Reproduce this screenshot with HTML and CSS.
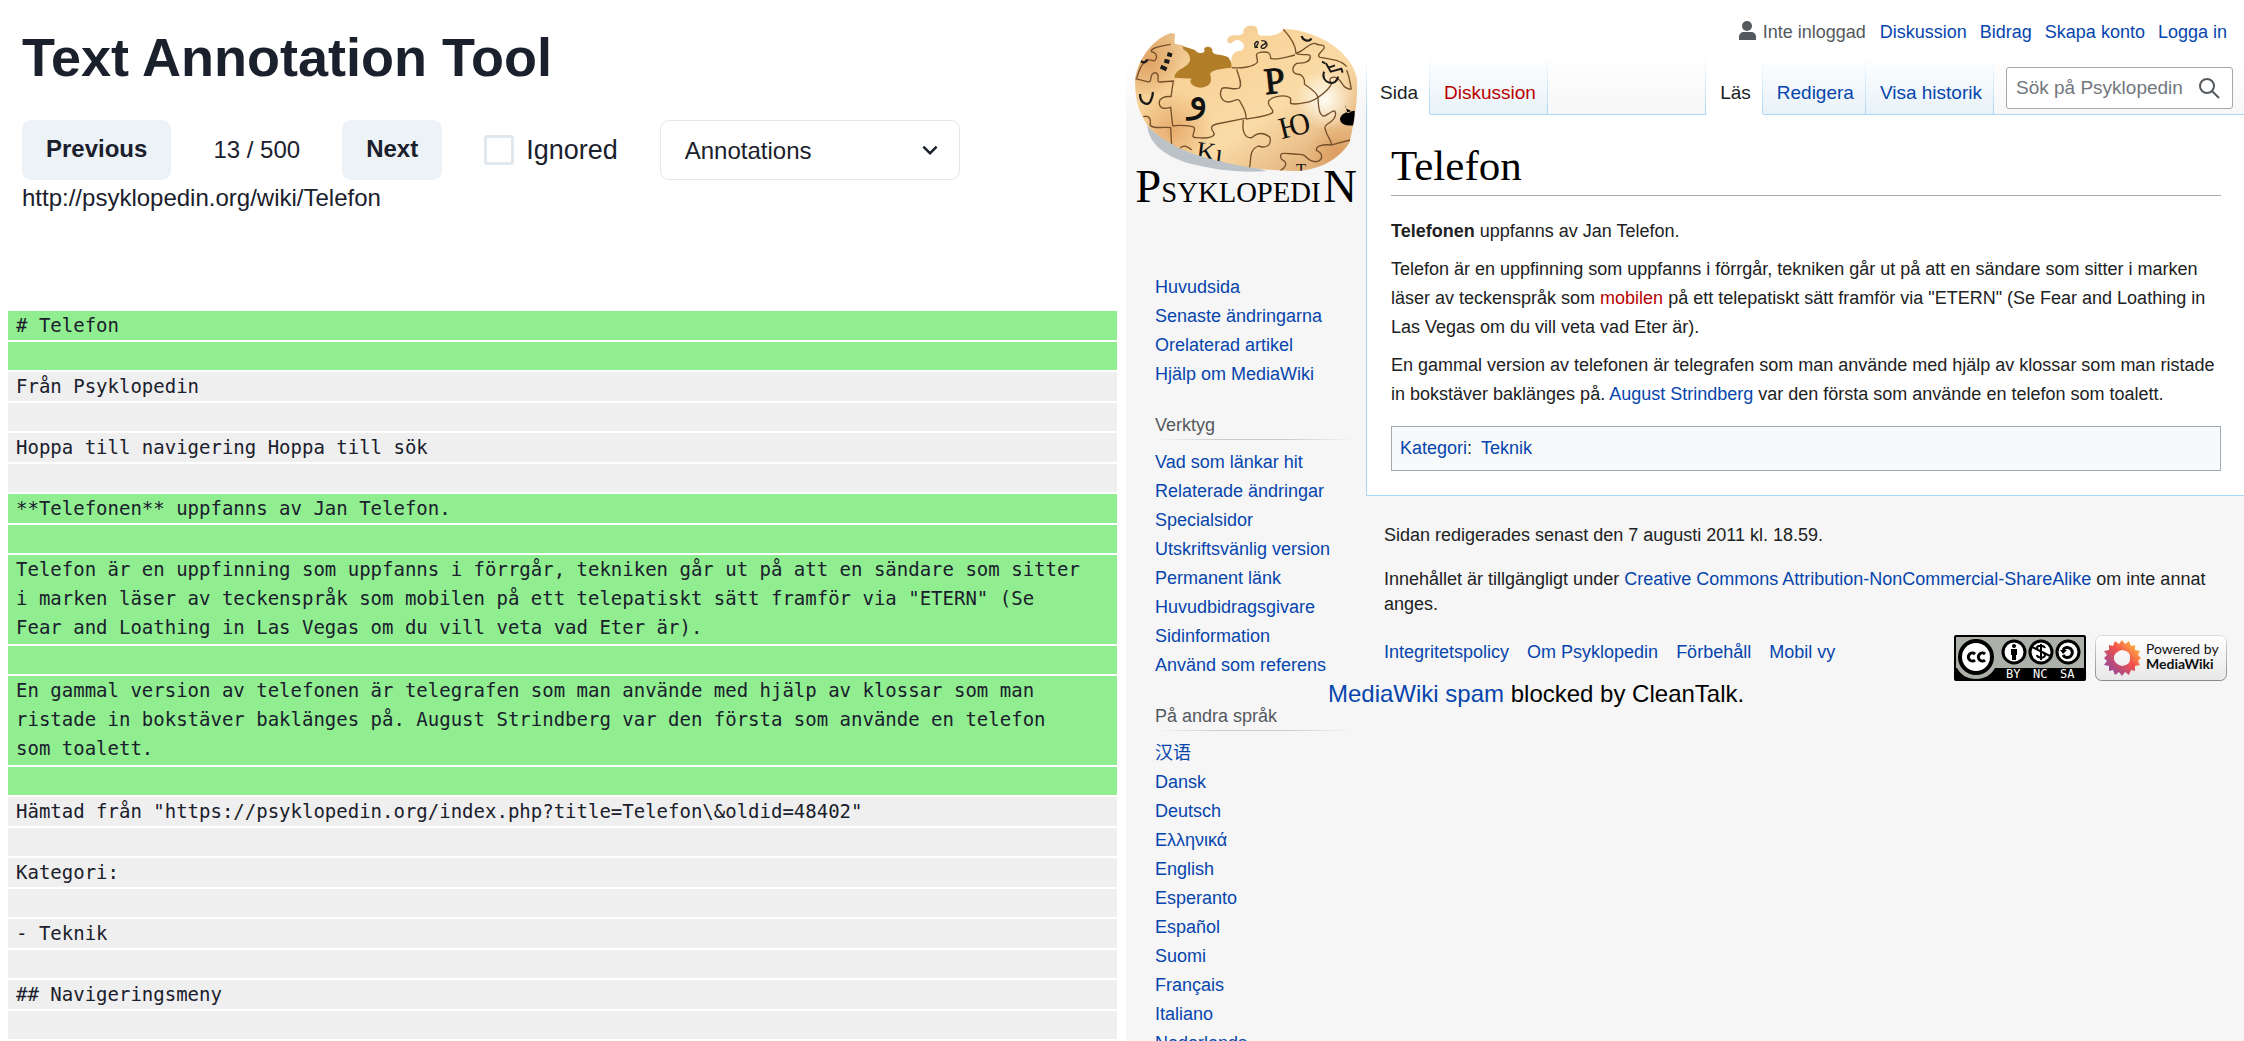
FILE: index.html
```html
<!DOCTYPE html>
<html lang="sv">
<head>
<meta charset="utf-8">
<title>Text Annotation Tool</title>
<link rel="stylesheet" href="styles.css">
</head>
<body>
<div class="app">
  <section class="tool">
    <header class="tool-head">
      <h1 class="tool-title">Text Annotation Tool</h1>
      <div class="controls">
        <button class="btn" type="button">Previous</button>
        <span class="counter">13 / 500</span>
        <button class="btn" type="button">Next</button>
        <label class="check"><input class="check-box" type="checkbox">Ignored</label>
        <div class="picker">
          <select class="picker-select" aria-label="Annotations"><option>Annotations</option></select>
          <svg class="picker-arrow" viewBox="0 0 24 24" aria-hidden="true"><path d="M16.59 8.59L12 13.17 7.41 8.59 6 10l6 6 6-6z"/></svg>
        </div>
      </div>
      <p class="source">http://psyklopedin.org/wiki/Telefon</p>
    </header>
    <div class="lines">
      <p class="line keep"># Telefon</p>
      <p class="line keep blank"></p>
      <p class="line">Från Psyklopedin</p>
      <p class="line blank"></p>
      <p class="line">Hoppa till navigering Hoppa till sök</p>
      <p class="line blank"></p>
      <p class="line keep">**Telefonen** uppfanns av Jan Telefon.</p>
      <p class="line keep blank"></p>
      <p class="line keep long">Telefon är en uppfinning som uppfanns i förrgår, tekniken går ut på att en sändare som sitter i marken läser av teckenspråk som mobilen på ett telepatiskt sätt framför via "ETERN" (Se Fear and Loathing in Las Vegas om du vill veta vad Eter är).</p>
      <p class="line keep blank"></p>
      <p class="line keep long">En gammal version av telefonen är telegrafen som man använde med hjälp av klossar som man ristade in bokstäver baklänges på. August Strindberg var den första som använde en telefon som toalett.</p>
      <p class="line keep blank"></p>
      <p class="line">Hämtad från "https://psyklopedin.org/index.php?title=Telefon\&amp;oldid=48402"</p>
      <p class="line blank"></p>
      <p class="line">Kategori:</p>
      <p class="line blank"></p>
      <p class="line">- Teknik</p>
      <p class="line blank"></p>
      <p class="line">## Navigeringsmeny</p>
      <p class="line blank"></p>
    </div>
  </section>

  <section class="wiki">
    <aside class="side">
      <a class="logo" href="#" aria-label="Psyklopedin">
        <svg viewBox="18 0 720 720">
          <defs>
            <linearGradient id="globe" x1="0" y1="0" x2="1" y2="1">
              <stop offset="0" stop-color="#dcae78"/><stop offset=".3" stop-color="#f8d399"/>
              <stop offset=".6" stop-color="#fadba6"/><stop offset="1" stop-color="#d8a06a"/>
            </linearGradient>
            <radialGradient id="shine"><stop offset="0" stop-color="#fffdf5"/><stop offset="1" stop-color="#fffdf5" stop-opacity="0"/></radialGradient>
            <radialGradient id="tan"><stop offset="0" stop-color="#d98f4c" stop-opacity=".6"/><stop offset="1" stop-color="#d98f4c" stop-opacity="0"/></radialGradient>
            <clipPath id="shell"><path d="M152 99C105 115 60 165 46 232C42 300 60 350 92 388C120 412 150 432 190 450C300 492 420 512 520 513C600 512 660 475 690 425C698 380 712 330 712 240C700 175 640 125 570 102C545 92 515 85 490 87C480 104 455 109 430 107C408 110 416 92 410 82C398 72 372 76 370 94C372 104 360 106 345 106C325 105 318 118 324 128C334 136 340 120 352 120C370 122 380 142 364 152C335 150 331 175 335 203C310 206 275 208 270 222C280 250 265 262 240 263C215 260 205 245 215 236L163 233C165 205 205 205 210 180C212 150 180 152 190 136L166 132C160 124 168 110 164 101Z"/></clipPath>
          </defs>
          <path d="M82 378C88 430 130 465 200 488C270 507 360 520 440 513L200 440Z" fill="#bcc3c8"/>
          <path d="M185 137L225 150C235 165 260 160 252 147C258 136 275 140 277 150C275 168 300 160 325 172L350 215L270 275L200 270L155 235Z" fill="#b27f28"/>
          <g clip-path="url(#shell)">
            <path d="M40 70H720V520H40Z" fill="url(#globe)"/>
            <circle cx="615" cy="300" r="90" fill="url(#shine)"/>
            <circle cx="90" cy="190" r="100" fill="url(#tan)"/>
            <circle cx="160" cy="390" r="120" fill="url(#tan)"/>
            <circle cx="650" cy="460" r="90" fill="url(#tan)"/>
            <g fill="none" stroke="#75502a" stroke-width="4">
              <path d="M152 133C120 138 90 145 94 155C118 160 110 185 98 182C85 175 65 180 50 235"/>
              <path d="M46 236L82 245C100 250 85 220 105 218C125 220 105 248 120 246L160 243L153 290C135 288 115 295 118 312C122 330 140 325 152 322L158 378"/>
              <path d="M70 350C85 345 95 355 90 375C100 388 120 380 152 383L155 440"/>
              <path d="M158 378C180 374 215 378 222 382C230 395 205 412 230 413C262 416 280 412 283 402C280 392 262 380 290 372L375 355"/>
              <path d="M350 208C356 230 368 250 358 264C340 272 320 258 306 265C295 285 305 305 325 306C345 304 355 290 362 308C375 330 380 345 378 358"/>
              <path d="M335 203C365 206 400 200 412 187C415 175 400 160 420 157C455 152 450 165 452 175C470 182 495 172 525 165"/>
              <path d="M490 88C515 115 528 140 528 160C545 168 565 160 570 166C575 185 555 190 530 190C515 200 515 218 530 222C550 222 555 240 553 252C570 265 590 275 594 292"/>
              <path d="M378 357C410 352 440 350 458 338C462 325 440 318 446 303C460 285 500 285 510 293C518 305 500 312 525 312C560 308 580 305 594 292C615 278 630 265 635 250C620 235 640 225 655 237C670 248 665 265 694 268"/>
              <path d="M370 360C365 395 375 415 395 413C410 400 430 395 450 412C455 440 435 445 415 438C385 450 395 480 388 505"/>
              <path d="M594 292C595 330 600 350 615 348C635 335 645 325 647 342C645 370 610 370 615 385C620 410 635 420 635 435L690 420"/>
              <path d="M635 435C605 432 585 440 590 452C610 460 610 480 590 485C555 485 565 462 540 463C505 463 470 450 485 478C510 490 490 508 480 512"/>
              <path d="M528 160C560 150 565 128 585 130C600 140 615 130 612 145C600 160 590 165 600 172C635 178 665 180 680 200M680 210C690 235 690 250 694 268M180 445C190 432 205 440 215 450"/>
            </g>
            <g fill="#111" font-family="'Liberation Serif', serif">
              <text x="203" y="330" font-size="128" font-family="'DejaVu Sans', sans-serif">و</text>
              <text x="432" y="280" font-size="112" stroke="#111" stroke-width="3" transform="rotate(-6 460 240)">P</text>
              <text x="474" y="410" font-size="92" transform="rotate(-14 510 370)">Ю</text>
              <text x="230" y="482" font-size="80" transform="rotate(7 260 450)">Kı</text>
              <text x="528" y="526" font-size="50">T</text>
            </g>
            <g fill="none" stroke="#1b1b1b" stroke-width="7">
              <path d="M60 282C60 315 88 318 92 302C96 292 100 285 98 276M62 182C70 192 80 185 82 178M545 108C550 125 570 125 574 115"/>
              <path d="M606 185L616 190M618 190L632 215L664 206L668 218M626 203L645 196M612 215C600 250 650 262 654 230" stroke-width="6"/>
              <path d="M404 144C412 138 418 125 412 124C400 128 402 144 414 142M424 122C440 122 444 130 430 134C418 140 424 150 436 142C446 134 440 126 434 130" stroke-width="4"/>
              <path d="M122 200L140 208M133 182L148 186M142 162L156 166" stroke-width="12"/>
            </g>
            <path d="M704 332C680 335 662 340 660 358C662 378 690 378 704 376ZM676 315C674 330 690 328 695 335L682 340Z" fill="#000"/>
          </g>
          <g fill="#000" font-family="'Liberation Serif', serif">
            <text x="46" y="605" font-size="140">P</text>
            <text x="124" y="605" font-size="86">SYKLOPEDI</text>
            <text x="610" y="605" font-size="140">N</text>
          </g>
        </svg>
      </a>
      <nav class="menu" aria-label="Navigering">
        <ul class="menu-list">
          <li><a href="#">Huvudsida</a></li>
          <li><a href="#">Senaste ändringarna</a></li>
          <li><a href="#">Orelaterad artikel</a></li>
          <li><a href="#">Hjälp om MediaWiki</a></li>
        </ul>
      </nav>
      <nav class="menu">
        <h2 class="menu-title">Verktyg</h2>
        <ul class="menu-list">
          <li><a href="#">Vad som länkar hit</a></li>
          <li><a href="#">Relaterade ändringar</a></li>
          <li><a href="#">Specialsidor</a></li>
          <li><a href="#">Utskriftsvänlig version</a></li>
          <li><a href="#">Permanent länk</a></li>
          <li><a href="#">Huvudbidragsgivare</a></li>
          <li><a href="#">Sidinformation</a></li>
          <li><a href="#">Använd som referens</a></li>
        </ul>
      </nav>
      <nav class="menu">
        <h2 class="menu-title">På andra språk</h2>
        <ul class="menu-list">
          <li><a href="#" lang="zh">汉语</a></li>
          <li><a href="#">Dansk</a></li>
          <li><a href="#">Deutsch</a></li>
          <li><a href="#">Ελληνικά</a></li>
          <li><a href="#">English</a></li>
          <li><a href="#">Esperanto</a></li>
          <li><a href="#">Español</a></li>
          <li><a href="#">Suomi</a></li>
          <li><a href="#">Français</a></li>
          <li><a href="#">Italiano</a></li>
          <li><a href="#">Nederlands</a></li>
        </ul>
      </nav>
    </aside>

    <div class="page">
      <header class="page-head">
        <nav class="personal">
          <span class="anon">
            <svg class="user-icon" viewBox="0 0 17 19" aria-hidden="true"><circle cx="8" cy="5" r="5"/><path d="M0 19v-3c0-3 2-5 5-5h7c3 0 5 2 5 5v3z"/></svg>
            Inte inloggad
          </span>
          <a href="#">Diskussion</a>
          <a href="#">Bidrag</a>
          <a href="#">Skapa konto</a>
          <a href="#">Logga in</a>
        </nav>
        <div class="tabs">
          <nav class="tab-group start">
            <a class="tab active" href="#">Sida</a>
            <a class="tab missing" href="#">Diskussion</a>
          </nav>
          <nav class="tab-group end">
            <a class="tab active" href="#">Läs</a>
            <a class="tab" href="#">Redigera</a>
            <a class="tab" href="#">Visa historik</a>
          </nav>
          <form class="search">
            <input class="search-input" type="text" placeholder="Sök på Psyklopedin" aria-label="Sök på Psyklopedin">
            <button class="search-btn" type="button" aria-label="Sök"><svg viewBox="0 0 22 22"><circle cx="9" cy="9" r="7"/><path d="M14 14l7 7"/></svg></button>
          </form>
        </div>
      </header>

      <main class="article">
        <h1 class="article-title">Telefon</h1>
        <p><b>Telefonen</b> uppfanns av Jan Telefon.</p>
        <p>Telefon är en uppfinning som uppfanns i förrgår, tekniken går ut på att en sändare som sitter i marken läser av teckenspråk som <a class="missing" href="#">mobilen</a> på ett telepatiskt sätt framför via "ETERN" (Se Fear and Loathing in Las Vegas om du vill veta vad Eter är).</p>
        <p>En gammal version av telefonen är telegrafen som man använde med hjälp av klossar som man ristade in bokstäver baklänges på. <a href="#">August Strindberg</a> var den första som använde en telefon som toalett.</p>
        <div class="categories"><span><a href="#">Kategori</a>:</span><a href="#">Teknik</a></div>
      </main>

      <footer class="foot">
        <p>Sidan redigerades senast den 7 augusti 2011 kl. 18.59.</p>
        <p>Innehållet är tillgängligt under <a href="#">Creative Commons Attribution-NonCommercial-ShareAlike</a> om inte annat anges.</p>
        <div class="foot-row">
          <nav class="foot-links">
            <a href="#">Integritetspolicy</a>
            <a href="#">Om Psyklopedin</a>
            <a href="#">Förbehåll</a>
            <a href="#">Mobil vy</a>
          </nav>
          <div class="badges">
            <a href="#" aria-label="Creative Commons BY NC SA">
              <svg class="badge" viewBox="0 0 132 46">
                <rect width="132" height="46" rx="2"/>
                <path d="M2 2H130V33H41C37 40 31 44 22 44S7 40 3 33H2Z" fill="#abb1a8"/>
                <circle cx="22" cy="22" r="18"/><circle cx="22" cy="22" r="14" fill="#fff"/>
                <g fill="none" stroke="#000" stroke-width="3"><path d="M21 19a4 4 0 1 0 0 6M31 19a4 4 0 1 0 0 6"/></g>
                <g fill="#fff" stroke="#000" stroke-width="3"><circle cx="60" cy="17" r="11"/><circle cx="87" cy="17" r="11"/><circle cx="114" cy="17" r="11"/></g>
                <circle cx="60" cy="11" r="2"/><path d="M57 14h6v6h-1v5h-4v-5h-1z"/>
                <g fill="none" stroke="#000" stroke-width="2"><path d="M91 13c-1-3-8-3-8 0 0 4 8 3 8 7 0 4-8 3-8 0M87 9v16M78 12l18 9"/><path d="M109 15a5 5 0 1 1 0 5" stroke-width="3"/></g>
                <path d="M106 15h7l-4 4z"/>
                <g fill="#fff" font-family="'DejaVu Sans Mono', monospace" font-size="12"><text x="52" y="43">BY</text><text x="79" y="43">NC</text><text x="106" y="43">SA</text></g>
              </svg>
            </a>
            <a href="#" aria-label="Powered by MediaWiki">
              <svg class="badge" viewBox="0 0 132 46">
                <defs>
                  <linearGradient id="plate" x1="0" y1="0" x2="0" y2="1"><stop offset="0" stop-color="#fff"/><stop offset="1" stop-color="#e8e8e8"/></linearGradient>
                  <linearGradient id="edge" x1="0" y1="0" x2="0" y2="1"><stop offset="0" stop-color="#ddd"/><stop offset="1" stop-color="#888"/></linearGradient>
                  <linearGradient id="sun" x1="1" y1="0" x2="0" y2="1"><stop offset=".1" stop-color="#ffc040"/><stop offset=".45" stop-color="#f4514c"/><stop offset=".9" stop-color="#8c489c"/></linearGradient>
                </defs>
                <rect x=".5" y=".5" width="131" height="45" rx="6" fill="url(#plate)" stroke="url(#edge)"/>
                <path fill="url(#sun)" fill-rule="evenodd" d="M27 5L30 9L34 6L36 11L40 10L40 15L45 16L43 20L46 23L43 26L45 30L40 31L40 36L36 35L34 40L30 37L27 41L24 37L20 40L18 35L14 36L14 31L9 30L12 26L9 23L12 20L9 16L14 15L14 10L18 11L20 6L24 9ZM27 15L24 16L21 18L19 21V25L21 28L24 30L27 31L31 30L34 28L35 25V21L34 18L31 16Z"/>
                <g fill="#111" font-family="Lato, sans-serif"><text x="51" y="19" font-size="14">Powered by</text><text x="51" y="34" font-size="14" font-weight="bold">MediaWiki</text></g>
              </svg>
            </a>
          </div>
        </div>
      </footer>
      <p class="spam"><a href="#">MediaWiki spam</a> blocked by CleanTalk.</p>
    </div>
  </section>
</div>
</body>
</html>
```

FILE: styles.css
```css
* { box-sizing: border-box; }
body, h1, h2, p, ul { margin: 0; padding: 0; }
ul { list-style: none; }
svg { display: block; }
a { color: #0645ad; text-decoration: none; }
body { font-family: "Liberation Sans", "Noto Sans CJK SC", sans-serif; font-size: 24px; background: #fff; }

.app { display: grid; grid-template-columns: minmax(0, 1fr) minmax(0, 1fr); column-gap: 8px; height: 100vh; overflow: hidden; }

/* Annotation tool */
.tool { color: #1a202c; overflow: hidden; }
.tool-head { padding: 24px 22px 0; min-height: 311px; line-height: 36px; }
.tool-title { font-size: 54px; line-height: 66px; }
.controls { display: flex; align-items: center; gap: 42px; margin-top: 30px; }
.btn { height: 60px; padding: 0 24px 2px; border: 0; border-radius: 9px; background: #edf2f7; color: inherit; font: bold 24px "Liberation Sans", sans-serif; }
.check { display: flex; align-items: center; gap: 12px; font-size: 27px; }
.check-box { appearance: none; width: 30px; height: 30px; margin: 0; border: 3px solid #e2e8f0; border-radius: 3px; }
.picker { position: relative; flex: 0 1 300px; }
.picker-select { appearance: none; width: 100%; height: 60px; padding: 0 48px 0 24px; border: 1px solid #e2e8f0; border-radius: 9px; background: #fff; color: inherit; font: 24px "Liberation Sans", sans-serif; }
.picker-arrow { position: absolute; right: 15px; top: 15px; width: 30px; height: 30px; fill: currentColor; pointer-events: none; }

.lines { display: grid; gap: 2px; padding: 0 1px 0 8px; }
.line { padding: 0 32px 0 8px; background: #efefef; font: 19px/29px "DejaVu Sans Mono", monospace; }
.long { padding-bottom: 2px; }
.blank { height: 28px; }
.keep { background: #90ee90; }

/* Wiki page */
.wiki { display: grid; grid-template-columns: 240px minmax(0, 1fr); overflow: hidden; color: #202122; font-size: 18px; background: linear-gradient(#fff 56px, #f6f6f6 120px); }
.side { line-height: 29px; }
.logo svg { width: 240px; height: 240px; }
.menu { padding: 0 12px 21px 29px; }
.menu:nth-of-type(1) { padding-top: 33px; }
.menu-title { color: #54595d; font-size: 18px; font-weight: normal; line-height: 30px; margin-bottom: 8px; background: linear-gradient(to right, transparent, #c8ccd1 33%, #c8ccd1 66%, transparent) bottom / 100% 1px no-repeat; }

.personal { display: flex; justify-content: flex-end; gap: 14px; height: 56px; padding: 21px 17px 0 0; line-height: 22px; }
.anon { display: flex; gap: 7px; color: #54595d; }
.user-icon { width: 17px; height: 19px; fill: #54595d; }
.personal a + a { margin-left: -1px; }
.tabs { display: flex; position: relative; height: 59px; margin-bottom: -1px; }
.tab-group { display: flex; background: linear-gradient(#fff, #a7d7f9) left / 1px 100% no-repeat; padding-left: 1px; }
.end { margin-left: auto; }
.tab { padding: 25px 12px 0 14px; font-size: 19px; line-height: 24px; border-bottom: 1px solid #a7d7f9; background: linear-gradient(#fff, #a7d7f9) right / 1px 100% no-repeat, linear-gradient(#fff, #e8f2f8); }
.active { color: #202122; border-bottom-color: #fff; background: linear-gradient(#fff, #a7d7f9) right / 1px 100% no-repeat, #fff; }
.start .active { padding-left: 13px; }
.missing { color: #ba0000; }
.search { display: flex; width: 227px; height: 42px; margin: 11px 11px 0 12px; border: 1px solid #a2a9b1; border-radius: 3px; background: #fff; }
.search-input { flex: 1; min-width: 0; padding: 0 0 0 9px; border: 0; background: none; color: #202122; font: 19px "Liberation Sans", sans-serif; }
.search-input::placeholder { color: #72777d; }
.search-btn { width: 34px; padding: 0; border: 0; background: none; }
.search-btn svg { width: 22px; height: 22px; fill: none; stroke: #54595d; stroke-width: 2; }

.article { padding: 24px 23px 24px 24px; border: 1px solid #a7d7f9; border-right: 0; background: #fff; line-height: 29px; }
.article-title { padding-bottom: 2px; margin-bottom: 21px; border-bottom: 1px solid #a2a9b1; color: #000; font: 43px/54px "Liberation Serif", serif; }
.article p { margin-bottom: 9px; }
.categories { display: flex; gap: 9px; margin-top: 17px; padding: 7px 8px; border: 1px solid #a2a9b1; background: #f8f9fa; }

.foot { padding: 27px 17px 0 18px; line-height: 25px; }
.foot p { margin-bottom: 19px; }
.foot-row { display: flex; justify-content: space-between; margin-top: -1px; }
.foot-links { display: flex; gap: 18px; padding-top: 5px; }
.badges { display: flex; gap: 9px; }
.badge { width: 132px; height: 46px; }
.spam { margin-left: -38px; color: #000; font-size: 24px; line-height: 26px; }
```
